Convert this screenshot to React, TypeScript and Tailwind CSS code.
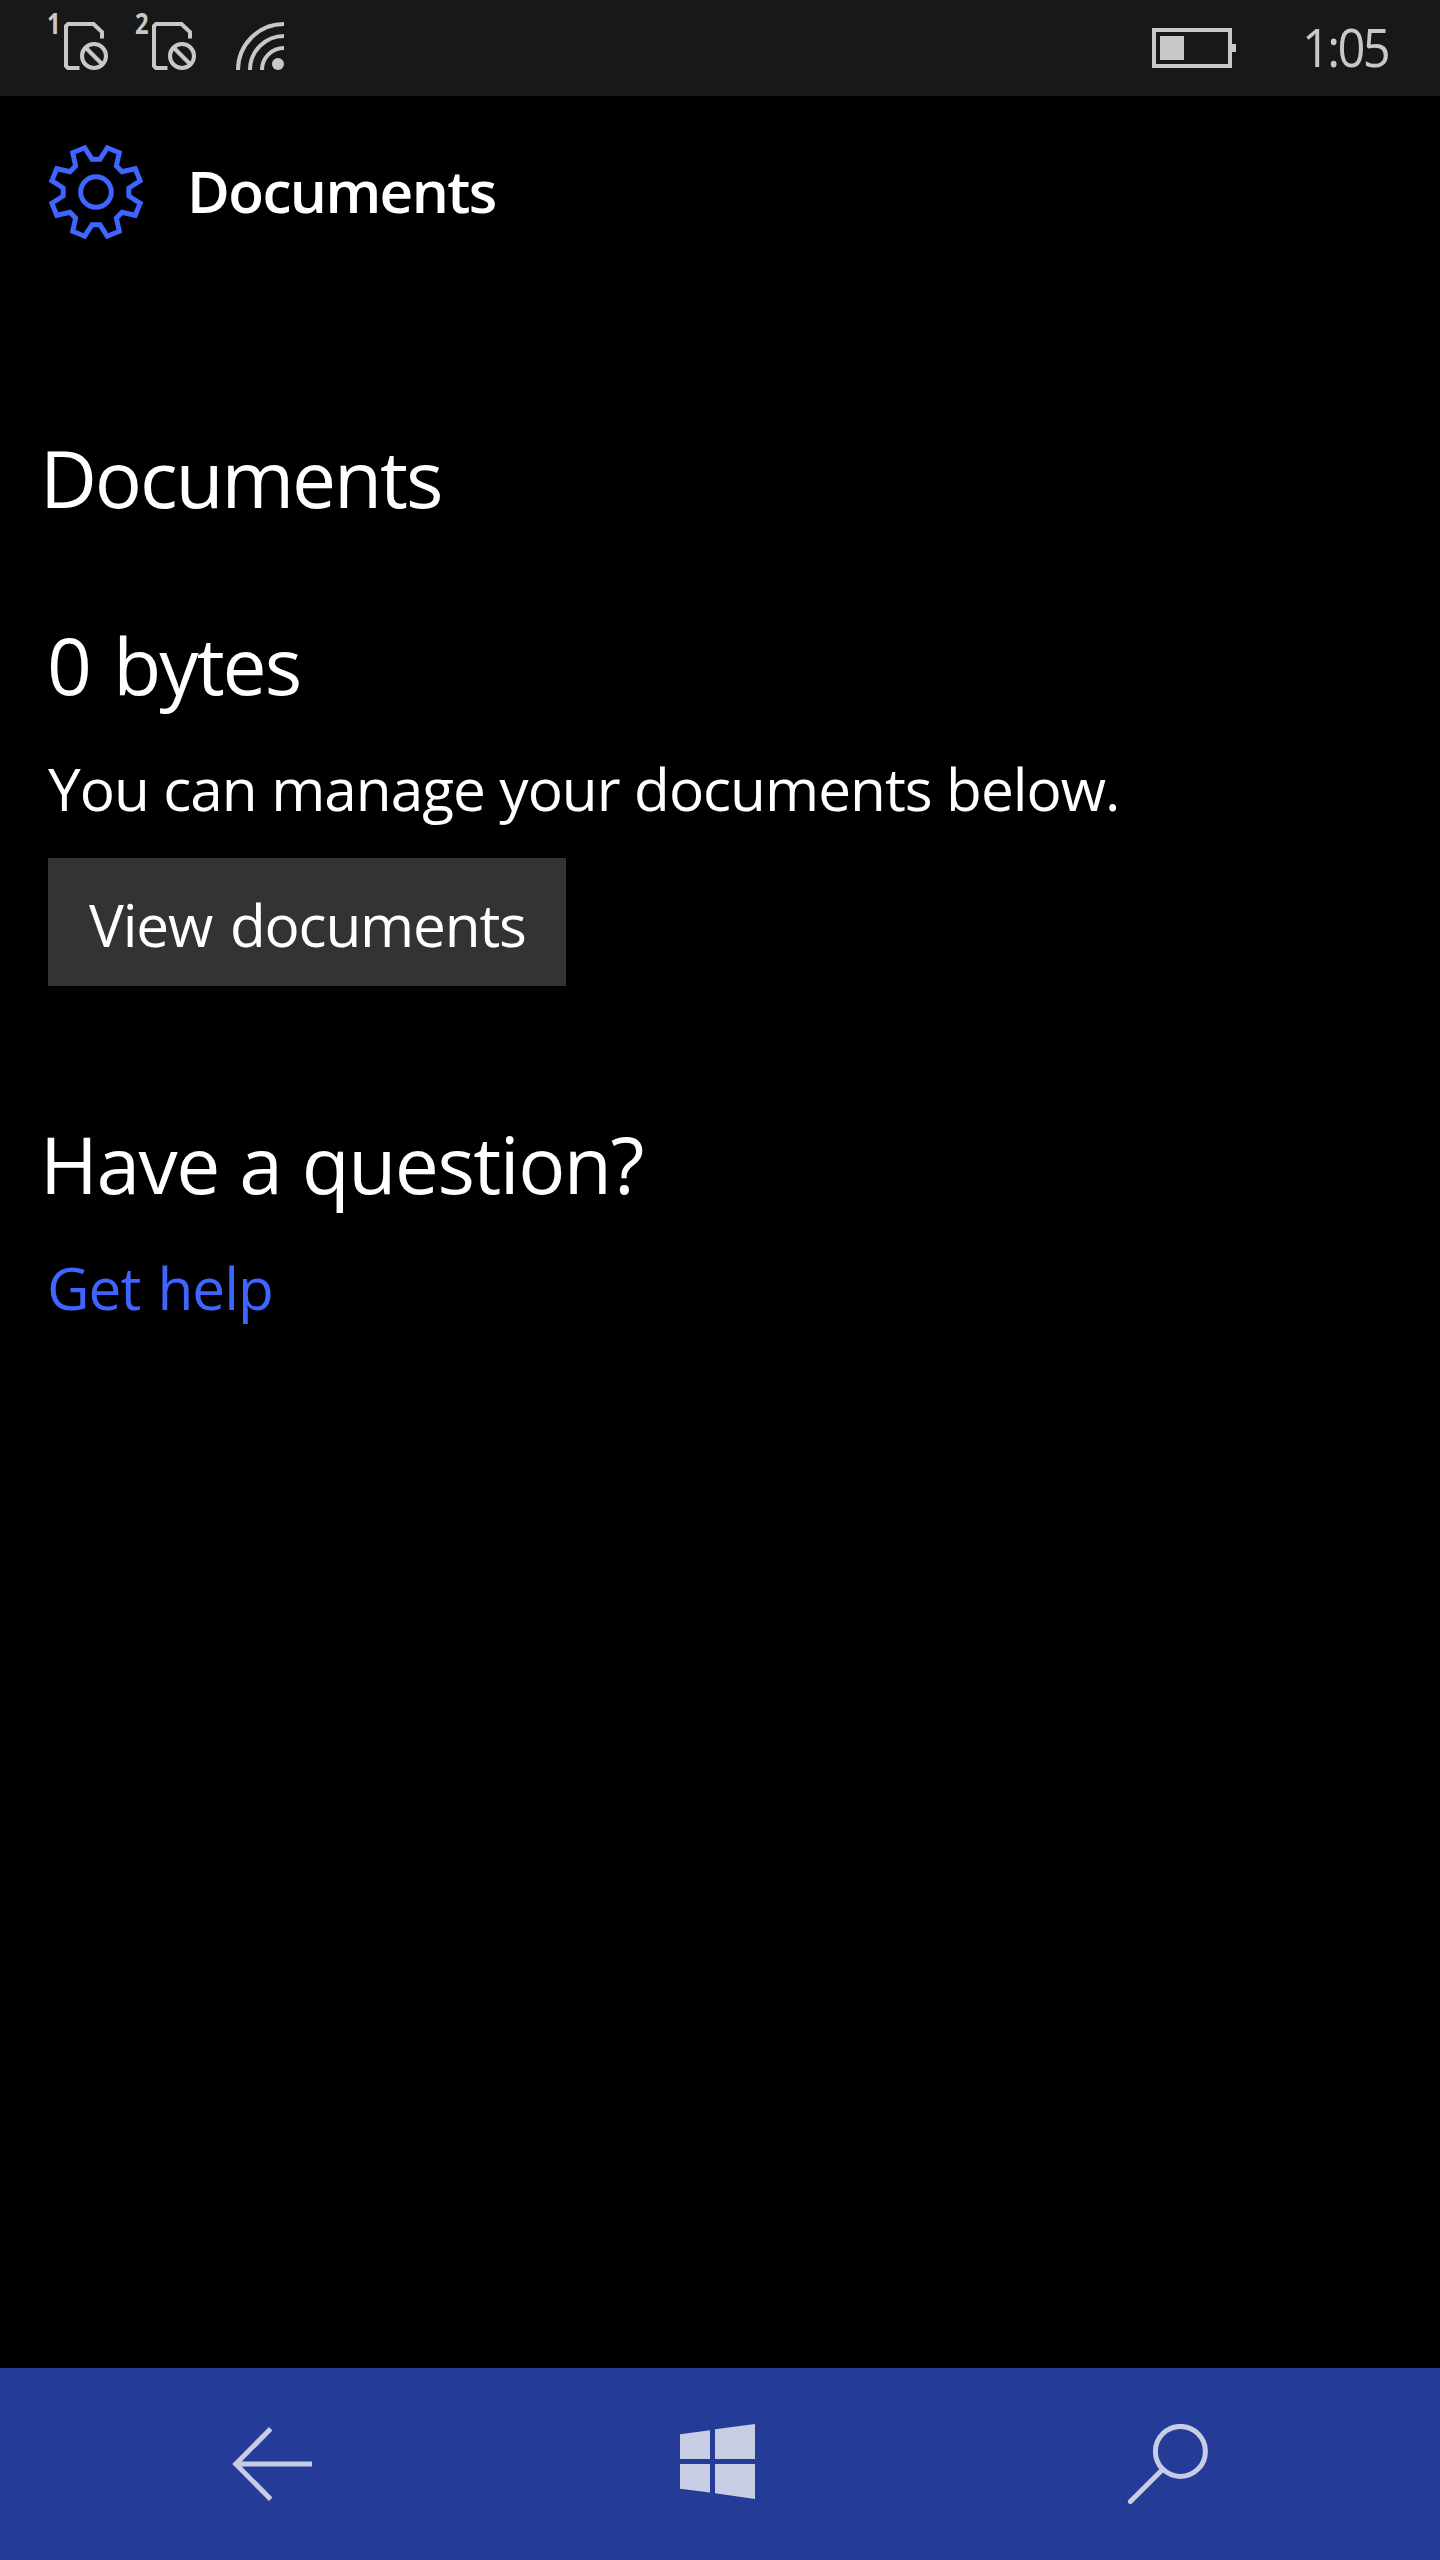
const TEETH = [0, 45, 90, 135, 180, 225, 270, 315];

/* Traces one tooth of the gear and repeats it around the centre. */
function gearPoints() {
  const tooth = [
    [-4, -32.8],
    [4, -32.8],
    [11.3, -44.2],
    [23.3, -39.2],
  ];
  return TEETH.flatMap((deg) => {
    const a = (deg * Math.PI) / 180;
    return tooth.map(([x, y]) =>
      `${(x * Math.cos(a) - y * Math.sin(a)).toFixed(2)},${(x * Math.sin(a) + y * Math.cos(a)).toFixed(2)}`
    );
  }).join(" ");
}

function GearIcon() {
  return (
    <svg className="size-24 shrink-0" viewBox="-48 -48 96 96" fill="none" stroke="currentColor" strokeWidth="5" strokeMiterlimit="10">
      <polygon points={gearPoints()} />
      <circle r="15.3" />
    </svg>
  );
}

function SimIcon({ slot }: { slot: string }) {
  return (
    <div className="flex h-14 w-[60px] shrink-0 items-start">
      <span className="-mt-[5px] -ml-px w-[17px] shrink-0 origin-left scale-x-85 text-[28px] leading-[28px] font-bold">{slot}</span>
      <svg className="mt-2 h-12 w-11 shrink-0" viewBox="0 0 44 48" fill="none" stroke="currentColor" strokeWidth="4">
        <path d="M15.500 46H4L2 44V4L4 2H29.500L38 10V16.500" />
        <circle cx="30" cy="34" r="12" />
        <path d="M21.500 25.500L38.500 42.500" />
      </svg>
    </div>
  );
}

function WifiIcon() {
  return (
    <svg className="h-12 w-12 shrink-0" viewBox="0 0 48 48" fill="none" stroke="currentColor" strokeWidth="4">
      <path d="M2 48A46 46 0 0 1 48 2M14 48A34 34 0 0 1 48 14M26 48A22 22 0 0 1 48 26" />
      <circle cx="42" cy="42" r="6" fill="currentColor" stroke="none" />
    </svg>
  );
}

function Battery() {
  return (
    <div className="flex items-center">
      <div className="h-10 w-20 border-4 border-[#c8c8c8] p-1">
        <div className="h-6 w-6 bg-[#c8c8c8]" />
      </div>
      <div className="h-2 w-1 bg-[#c8c8c8]" />
    </div>
  );
}

function StatusBar() {
  return (
    <div className="flex h-24 shrink-0 items-start bg-[#181818] pt-3.5 pl-12 text-[#c8c8c8]">
      <div className="flex gap-7">
        <SimIcon slot="1" />
        <SimIcon slot="2" />
      </div>
      <div className="mt-2 ml-10">
        <WifiIcon />
      </div>
      <div className="mt-3.5 ml-auto">
        <Battery />
      </div>
      <div className="mt-[-7px] ml-[66px] w-[138px] origin-left scale-x-93 text-[52.5px] leading-[80px] tracking-[-2.8px]">1:05</div>
    </div>
  );
}

function NavBar() {
  return (
    <nav className="flex h-48 shrink-0 items-center justify-between bg-[#243c98] px-[226px] text-[#c8cde6]">
      <button className="flex w-24 justify-start pl-1">
        <svg className="h-20 w-[84px]" viewBox="230 2424 84 80" fill="none" stroke="currentColor" strokeWidth="5">
          <path d="M270.700 2428.700L235.800 2464L270.700 2499.300M236 2464H312" />
        </svg>
      </button>
      <button className="-ml-3">
        <svg className="h-20 w-20" viewBox="678 2424 80 80" fill="currentColor">
          <path d="M680 2434.200L710 2430.200V2459H680ZM715 2429.300L755 2424V2459H715ZM680 2464H710V2492.600L680 2488.700ZM715 2464H755V2499L715 2493.300Z" />
        </svg>
      </button>
      <button>
        <svg className="h-20 w-[88px]" viewBox="1126 2424 88 80" fill="none" stroke="currentColor" strokeWidth="5">
          <circle cx="1180.400" cy="2451.400" r="25" />
          <path d="M1162 2470L1130.400 2501.600" strokeLinecap="round" />
        </svg>
      </button>
    </nav>
  );
}

export default function App() {
  return (
    <div className="flex h-[2560px] w-[1440px] flex-col overflow-hidden bg-black font-['Open_Sans',sans-serif] text-white">
      <StatusBar />
      <header className="flex h-48 shrink-0 items-center pl-12">
        <span className="text-[#3e65ff]">
          <GearIcon />
        </span>
        <h1 className="ml-[43px] pb-[5px] text-[58.5px] leading-[80px] font-semibold tracking-[-1.6px]">Documents</h1>
      </header>
      <main className="flex flex-1 flex-col items-start pt-[140px] pl-12 text-[58.5px] leading-[80px] whitespace-nowrap">
        <h2 className="-ml-2 text-[78.5px] leading-[100px] tracking-[-2.1px]">Documents</h2>
        <p className="mt-[87px] -ml-px text-[78.5px] leading-[100px] tracking-[-2px] [word-spacing:5px]">0 bytes</p>
        <p className="mt-[33px] tracking-[-1px] [word-spacing:0.3px]">You can manage your documents below.</p>
        <button className="mt-[30px] h-32 w-[518px] bg-[#333333] pt-[4px] pl-[41px] text-left tracking-[-1.2px] [word-spacing:4px]">View documents</button>
        <h2 className="mt-[128px] -ml-2 text-[78.5px] leading-[100px] tracking-[-1.5px] [word-spacing:1.5px]">Have a question?</h2>
        <a className="mt-[33px] -ml-px tracking-[-1px] text-[#3e65ff] [word-spacing:3px]">Get help</a>
      </main>
      <NavBar />
    </div>
  );
}
